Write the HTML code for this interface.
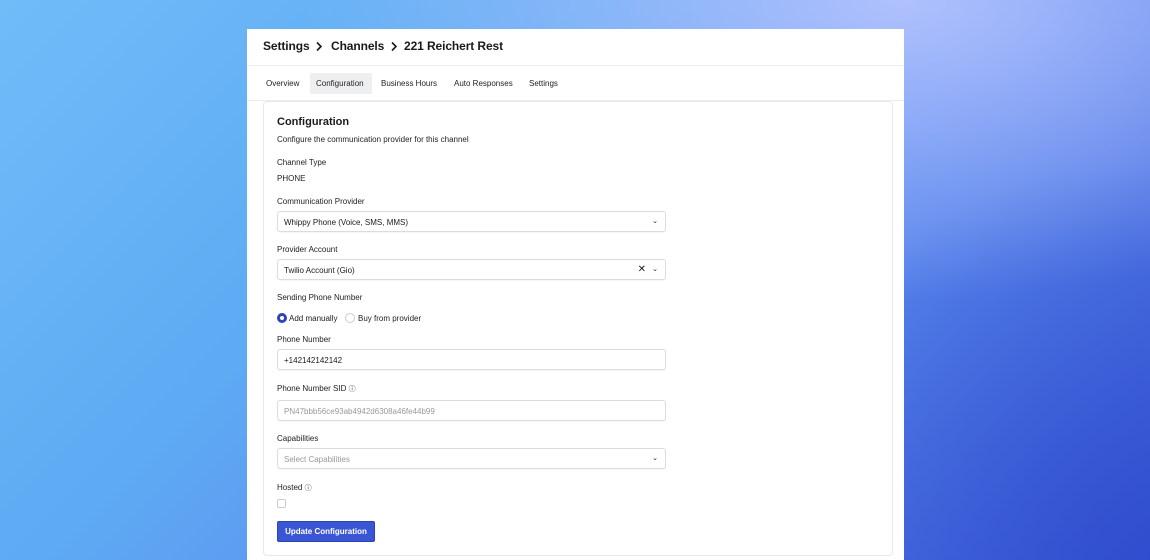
<!DOCTYPE html>
<html><head><meta charset="utf-8"><style>
*{box-sizing:border-box;margin:0;padding:0}
html{width:1150px;height:560px;overflow:hidden;background:#5a9ef0}
body{width:1150px;height:560px;overflow:hidden;font-family:"Liberation Sans",sans-serif;color:#1a1a1a;position:relative;
background:linear-gradient(135deg,#70bcf9 0%,#5eaaf3 35%,#5c8ef0 60%,#3a57d6 100%);}
.bg2{position:absolute;inset:0;background:radial-gradient(ellipse 600px 300px at 900px 0px,rgba(190,200,255,.85),rgba(190,200,255,0));}
.bg3{position:absolute;inset:0;background:radial-gradient(ellipse 400px 400px at 1150px 560px,rgba(40,70,200,.6),rgba(40,70,200,0));}
.panel{position:absolute;left:247px;top:29px;width:657px;height:531px;background:#fff}
.a{position:absolute;white-space:nowrap}
.crumb{top:10px;font-size:12px;font-weight:bold;letter-spacing:-.1px}
.hr{position:absolute;left:0;right:0;height:1px;background:#ececec}
.tab{font-size:8px;top:50px;color:#222}
.tabsel{position:absolute;left:63px;top:44px;width:62px;height:21px;background:#eeeff1;border-radius:2px}
.card{position:absolute;left:16px;top:72px;width:630px;height:455px;border:1px solid #e8e8e8;border-radius:4px}
.lbl{font-size:8px;color:#222;left:30px}
.inp{position:absolute;left:30px;width:389px;height:21px;border:1px solid #dcdcdc;border-radius:3px;font-size:8px;padding:6px 6px;box-shadow:0 1px 1px rgba(0,0,0,.04)}
.chev{position:absolute;right:7px;top:5px;font-size:7px}
.ph{color:#999}
</style></head><body><div class="bg2"></div><div class="bg3"></div>
<div class="panel">
<div class="a crumb" style="left:16px">Settings</div>
<svg class="a" style="left:68px;top:12px" width="8" height="11" viewBox="0 0 8 11"><path d="M2 1.5 L6 5.5 L2 9.5" fill="none" stroke="#1a1a1a" stroke-width="1.6"/></svg>
<div class="a crumb" style="left:84px">Channels</div>
<svg class="a" style="left:143px;top:12px" width="8" height="11" viewBox="0 0 8 11"><path d="M2 1.5 L6 5.5 L2 9.5" fill="none" stroke="#1a1a1a" stroke-width="1.6"/></svg>
<div class="a crumb" style="left:157px">221 Reichert Rest</div>
<div class="hr" style="top:36px"></div>
<div class="tabsel"></div>
<div class="a tab" style="left:19px">Overview</div>
<div class="a tab" style="left:69px">Configuration</div>
<div class="a tab" style="left:134px">Business Hours</div>
<div class="a tab" style="left:207px">Auto Responses</div>
<div class="a tab" style="left:282px">Settings</div>
<div class="hr" style="top:71px"></div>
<div class="card"></div>
<div class="a" style="left:30px;top:87px;font-size:11px;font-weight:bold">Configuration</div>
<div class="a lbl" style="top:106px">Configure the communication provider for this channel</div>
<div class="a lbl" style="top:129px">Channel Type</div>
<div class="a lbl" style="top:145px">PHONE</div>
<div class="a lbl" style="top:168px">Communication Provider</div>
<div class="inp" style="top:182px">Whippy Phone (Voice, SMS, MMS)<span class="chev">&#x2304;</span></div>
<div class="a lbl" style="top:216px">Provider Account</div>
<div class="inp" style="top:230px">Twilio Account (Gio)<span class="chev" style="right:19px;top:4px;font-size:10px">&#x2715;</span><span class="chev">&#x2304;</span></div>
<div class="a lbl" style="top:264px">Sending Phone Number</div>
<div class="a" style="left:30px;top:284px;width:10px;height:10px;border-radius:50%;border:3px solid #2f44b8"></div>
<div class="a lbl" style="left:42px;top:285px">Add manually</div>
<div class="a" style="left:98px;top:284px;width:10px;height:10px;border-radius:50%;border:1px solid #ccc"></div>
<div class="a lbl" style="left:111px;top:285px">Buy from provider</div>
<div class="a lbl" style="top:306px">Phone Number</div>
<div class="inp" style="top:320px">+142142142142</div>
<div class="a lbl" style="top:355px">Phone Number SID <span style="font-size:7px">&#x24D8;</span></div>
<div class="inp ph" style="top:371px">PN47bbb56ce93ab4942d6308a46fe44b99</div>
<div class="a lbl" style="top:405px">Capabilities</div>
<div class="inp ph" style="top:419px">Select Capabilities<span class="chev" style="color:#222">&#x2304;</span></div>
<div class="a lbl" style="top:454px">Hosted <span style="font-size:7px">&#x24D8;</span></div>
<div class="a" style="left:30px;top:470px;width:9px;height:9px;border:1px solid #ccc;border-radius:2px"></div>
<div class="a" style="left:30px;top:492px;width:98px;height:21px;background:#3a56d4;border:1px solid #2c44b0;border-radius:2px;color:#fff;font-size:8px;font-weight:bold;text-align:center;line-height:19px">Update Configuration</div>
</div>
</body></html>
